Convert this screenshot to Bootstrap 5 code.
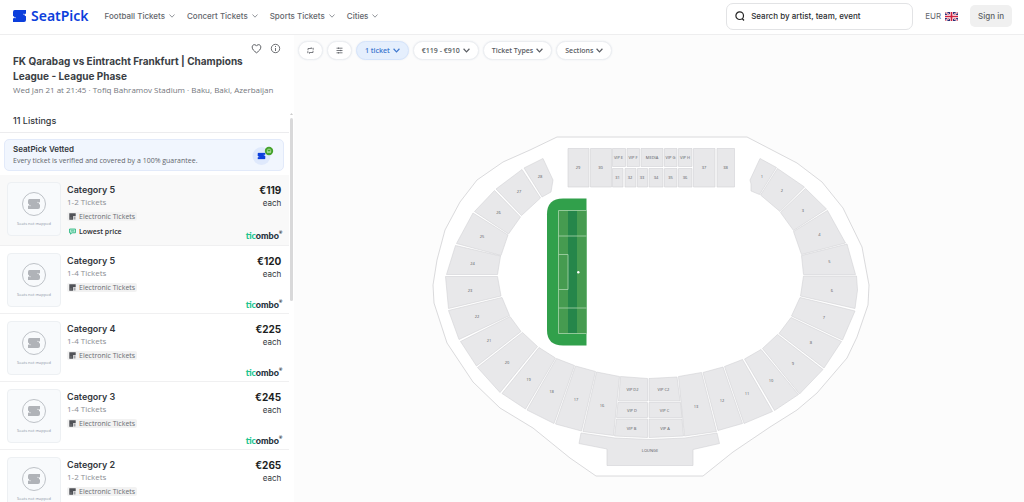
<!DOCTYPE html>
<html lang="en">
<head>
<meta charset="utf-8">
<meta name="viewport" content="width=device-width, initial-scale=1">
<title>FK Qarabag vs Eintracht Frankfurt | SeatPick</title>
<link rel="stylesheet" href="https://cdn.jsdelivr.net/npm/bootstrap@5.3.0/dist/css/bootstrap.min.css">
<style>
  body { font-family: Inter, "Open Sans", sans-serif; font-size: 8px; line-height: 12px; color: #33373d; background: #fcfcfc; }
  button, input { font-family: inherit; }
  .site-head { background: #fff; border-bottom: 1px solid #eeeeef; padding: 2px 12px 4px; min-height: 35px; }
  .brand-name { font-family: "Noto Sans", sans-serif; font-weight: 600; font-size: 14px; line-height: 20px; color: #0c3fdc; }
  .menu-link { border: 0; background: none; padding: 0; font-size: 8px; font-weight: 500; color: #63666c; white-space: nowrap; }
  .menu-list { gap: 12px; margin-left: 16px; }
  .chev { width: 6px; height: 6px; fill: none; stroke: currentColor; stroke-width: 1; }
  .menu-link .chev { color: #94979c; }
  .search-box { width: 187px; height: 27px; border: 1px solid #e2e3e5; border-radius: 7px; padding: 0 8px; gap: 6px; background: #fff; }
  .search-box input { border: 0; outline: 0; padding: 0; min-width: 0; font-size: 8px; font-weight: 500; color: #2b2d31; background: none; }
  .search-box input::placeholder { color: #2b2d31; opacity: 1; }
  .sign-in { border: 0; border-radius: 5px; background: #f0f0f0; color: #5c5f64; font-size: 8px; font-weight: 500; padding: 5px 8px; line-height: 12px; }
  .currency { border: 0; background: none; padding: 0; color: #63666c; gap: 4px; margin: 0 12px; font-size: 8px; }

  .side { width: 294px; background: #fff; }
  .event-info { padding: 8px 8px 0 13px; }
  .event-tools { gap: 8px; }
  .tool-btn { border: 0; background: none; padding: 0; line-height: 0; color: #4a4d52; }
  .event-title { font-size: 10px; line-height: 15px; font-weight: 700; margin: 0; padding-right: 20px; color: #3a3e44; }
  .event-meta { font-family: "Open Sans", sans-serif; color: #74777d; line-height: 12px; white-space: nowrap; }
  .count-head { font-size: 9px; line-height: 12px; font-weight: 500; padding: 19px 13px 5px; margin: 0; border-bottom: 1px solid #ececee; }
  .vetted { margin: 6px 5px 4px 4px; border: 1px solid #e2eafa; border-radius: 5px; background: #f1f6fe; padding: 3px 9px 4px 8px; }
  .vetted-title { font-size: 8px; font-weight: 600; line-height: 12px; }
  .vetted-text { font-family: "Open Sans", sans-serif; font-size: 7px; line-height: 11px; color: #62656b; }
  .ticket-row { height: 68px; padding: 7px 7px 0; border-bottom: 1px solid #f0f0f1; color: inherit; }
  .ticket-row.best { height: 71px; background: #f9f9f9; }
  .thumb { width: 54px; height: 54px; border: 1px solid #edf0f3; border-radius: 4px; background: #f8fafc; padding-top: 8px; }
  .thumb svg { width: 26px; height: 26px; }
  .thumb small { font-family: "Open Sans", sans-serif; font-size: 4px; line-height: 4px; color: #8b95a5; margin-top: 5px; }
  .ticket-body { padding-left: 6px; padding-top: 2px; }
  .cat { font-size: 9px; line-height: 12px; font-weight: 600; }
  .qty { font-family: "Open Sans", sans-serif; line-height: 12px; color: #8b8e94; }
  .tag { font-family: "Open Sans", sans-serif; font-size: 7px; line-height: 9px; background: #f2f2f2; color: #6a6d73; padding: 0 2px; gap: 3px; border-radius: 2px; margin-top: 4px; }
  .tag.low { background: none; color: #2b2d31; font-weight: 600; margin-top: 6px; }
  .tag svg { width: 7px; height: 7px; }
  .ticket-price { padding: 1px 1px 3px 0; }
  .ticket-row.best .ticket-price { padding-bottom: 4px; }
  .price { font-size: 10px; line-height: 14px; font-weight: 700; color: #1d1f23; }
  .seller { font-family: Lato, sans-serif; font-weight: 900; font-size: 9px; line-height: 10px; color: #24303a; margin-right: -1px; }
  .seller b { color: #1cc48f; font-weight: 900; }
  .seller sup { font-size: 4px; top: -5px; }
  .scroll-track { width: 5px; margin: 78px 1px 0 0; gap: 3px; }
  .scroll-thumb { width: 3px; height: 47%; background: #d9d9da; border-radius: 2px; }

  .filters { padding: 6px 4px 5px; gap: 4px; }
  .pill { border: 1px solid #eceef1; border-radius: 10px; height: 19px; background: #fff; box-shadow: 0 0 2px #e6eaf0; font-family: "Open Sans", sans-serif; font-size: 7px; font-weight: 600; color: #5a5d63; padding: 0 8px; gap: 3px; line-height: 10px; white-space: nowrap; }
  .pill.on { background: #e5effd; border-color: #d5e4fb; color: #3f78cf; }
  .pill svg { width: 7px; height: 7px; }
  .map { min-height: 0; }
  .blocks { fill: #e8e8ea; stroke: #d2d2d5; stroke-width: .6; }
  .block-names { font-family: "Open Sans", sans-serif; font-size: 4px; fill: #55575c; text-anchor: middle; }
</style>
<script src="https://cdn.jsdelivr.net/npm/bootstrap@5.3.0/dist/js/bootstrap.bundle.min.js"></script>
</head>
<body class="vh-100 d-flex flex-column overflow-hidden">
<svg class="d-none" aria-hidden="true">
  <symbol id="mark-s" viewBox="0 0 14 12"><path d="M2.200 0H13.500V3.300L12 5q.2.900 1.500 1.200V10q0 2-2 2H.5V8.700L2 7.200Q1.700 6.200.5 6V2Q.5 0 2.200 0z" fill="currentColor"/><path d="M0 7.300l3.500.5M10.500 4.200L14 4.600" stroke="#fff" stroke-width=".6"/></symbol>
  <symbol id="chev" viewBox="0 0 6 6"><path d="M.5 1.500L3 4.200l2.500-2.700"/></symbol>
  <symbol id="no-map" viewBox="0 0 26 26"><circle cx="13" cy="13" r="11.500" fill="none" stroke="#b7bbc1" stroke-width=".9"/><path d="M8.500 8H19v3l-1.200 1.500q.2.800 1.200 1V16q0 2-2 2H7v-3l1.200-1.400Q8 12.800 7 12.500V10q0-2 1.500-2z" fill="#b0b3b8"/><path d="M6.500 14.300l3.500.5M16 11.300l3.500.5" stroke="#f8fafc" stroke-width=".5"/></symbol>
  <symbol id="eticket" viewBox="0 0 7 7"><path d="M.3.300h6.400v3H4v3.400H.3z" fill="#505257"/><path d="M4.500 4h2v2.500h-2z" fill="#a3a5a9"/><path d="M1 5h2" stroke="#999" stroke-width=".5"/></symbol>
</svg>

<header class="site-head d-flex align-items-center">
  <a href="#" class="d-flex align-items-center text-decoration-none gap-1" aria-label="SeatPick">
    <svg width="15" height="12" color="#0c3fdc"><use href="#mark-s"/></svg>
    <span class="brand-name">SeatPick</span>
  </a>
  <nav class="menu-list d-flex align-items-center">
    <button class="menu-link d-flex align-items-center gap-1">Football Tickets <svg class="chev"><use href="#chev"/></svg></button>
    <button class="menu-link d-flex align-items-center gap-1">Concert Tickets <svg class="chev"><use href="#chev"/></svg></button>
    <button class="menu-link d-flex align-items-center gap-1">Sports Tickets <svg class="chev"><use href="#chev"/></svg></button>
    <button class="menu-link d-flex align-items-center gap-1">Cities <svg class="chev"><use href="#chev"/></svg></button>
  </nav>
  <label class="search-box d-flex align-items-center ms-auto">
    <svg width="10" height="10" viewBox="0 0 10 10" fill="none" stroke="#222" stroke-width="1.200"><circle cx="4.700" cy="4.700" r="3.800"/><path d="M7.200 7.500L9 9.500"/></svg>
    <input class="flex-fill" type="text" placeholder="Search by artist, team, event" aria-label="Search by artist, team, event">
  </label>
  <button class="currency d-flex align-items-center">EUR
    <svg width="13" height="9" viewBox="0 0 13 9"><rect width="13" height="9" rx="1" fill="#2b2f77"/><path d="M0 0l13 9M13 0L0 9" stroke="#fff" stroke-width="1.800"/><path d="M0 0l13 9M13 0L0 9" stroke="#d0314a" stroke-width=".7"/><path d="M6.500 0v9M0 4.500h13" stroke="#fff" stroke-width="3"/><path d="M6.500 0v9M0 4.500h13" stroke="#d0213f" stroke-width="1.700"/></svg>
  </button>
  <button class="sign-in">Sign in</button>
</header>

<div class="d-flex flex-fill overflow-hidden">
  <aside class="side d-flex flex-shrink-0">
    <div class="flex-fill overflow-hidden">
      <div class="event-info">
        <div class="event-tools d-flex justify-content-end">
          <button class="tool-btn" aria-label="Save"><svg width="11" height="11" viewBox="0 0 11 11" fill="none" stroke="currentColor" stroke-width=".9"><path d="M5.500 9.800C3 8 1.200 6.400 1.200 4.100c0-2.700 3.200-3.300 4.300-1 1.100-2.300 4.300-1.700 4.300 1 0 2.300-1.800 3.900-4.300 5.700z"/></svg></button>
          <button class="tool-btn" aria-label="Info"><svg width="11" height="11" viewBox="0 0 11 11" fill="none" stroke="currentColor" stroke-width=".8"><circle cx="5.500" cy="5.500" r="4.200"/><path d="M5.500 5v3M5.500 3v1"/></svg></button>
        </div>
        <h1 class="event-title">FK Qarabag vs Eintracht Frankfurt | Champions League - League Phase</h1>
        <div class="event-meta">Wed Jan 21 at 21:45 · Tofiq Bahramov Stadium · Baku, Baki, Azerbaijan</div>
      </div>
      <h2 class="count-head">11 Listings</h2>
      <div class="vetted d-flex align-items-center justify-content-between">
        <div>
          <div class="vetted-title">SeatPick Vetted</div>
          <div class="vetted-text">Every ticket is verified and covered by a 100% guarantee.</div>
        </div>
        <svg width="22" height="20" viewBox="0 0 22 20"><circle cx="9.500" cy="11" r="9" fill="#dfe9fc"/><svg x="5" y="7.500" width="9" height="7" color="#0c3fdc"><use href="#mark-s"/></svg><circle cx="17" cy="6" r="4.200" fill="#46a32c"/><path d="M15.300 6.800V5.600q0-1.500 1.700-1.500t1.700 1.500v1.200zM15 7.300h4" fill="none" stroke="#c9efb6" stroke-width=".7"/></svg>
      </div>

      <article class="ticket-row best d-flex">
        <div class="thumb d-flex flex-column align-items-center"><svg><use href="#no-map"/></svg><small>Seats not mapped</small></div>
        <div class="ticket-body flex-fill d-flex flex-column align-items-start">
          <div class="cat">Category 5</div><div class="qty">1-2 Tickets</div>
          <div class="tag d-flex align-items-center"><svg><use href="#eticket"/></svg>Electronic Tickets</div>
          <div class="tag low d-flex align-items-center"><svg viewBox="0 0 7 7"><path d="M.5 1h6v3.800H3L1.500 6.200V4.800h-1z" fill="#b5ead4" stroke="#23b57c" stroke-width=".8"/><path d="M2 2.900h3" stroke="#23b57c" stroke-width=".8"/></svg>Lowest price</div>
        </div>
        <div class="ticket-price d-flex flex-column align-items-end"><div class="price">€119</div><div>each</div><div class="seller mt-auto"><b>tic</b>ombo<sup>®</sup></div></div>
      </article>
      <article class="ticket-row d-flex">
        <div class="thumb d-flex flex-column align-items-center"><svg><use href="#no-map"/></svg><small>Seats not mapped</small></div>
        <div class="ticket-body flex-fill d-flex flex-column align-items-start">
          <div class="cat">Category 5</div><div class="qty">1-4 Tickets</div>
          <div class="tag d-flex align-items-center"><svg><use href="#eticket"/></svg>Electronic Tickets</div>
        </div>
        <div class="ticket-price d-flex flex-column align-items-end"><div class="price">€120</div><div>each</div><div class="seller mt-auto"><b>tic</b>ombo<sup>®</sup></div></div>
      </article>
      <article class="ticket-row d-flex">
        <div class="thumb d-flex flex-column align-items-center"><svg><use href="#no-map"/></svg><small>Seats not mapped</small></div>
        <div class="ticket-body flex-fill d-flex flex-column align-items-start">
          <div class="cat">Category 4</div><div class="qty">1-4 Tickets</div>
          <div class="tag d-flex align-items-center"><svg><use href="#eticket"/></svg>Electronic Tickets</div>
        </div>
        <div class="ticket-price d-flex flex-column align-items-end"><div class="price">€225</div><div>each</div><div class="seller mt-auto"><b>tic</b>ombo<sup>®</sup></div></div>
      </article>
      <article class="ticket-row d-flex">
        <div class="thumb d-flex flex-column align-items-center"><svg><use href="#no-map"/></svg><small>Seats not mapped</small></div>
        <div class="ticket-body flex-fill d-flex flex-column align-items-start">
          <div class="cat">Category 3</div><div class="qty">1-4 Tickets</div>
          <div class="tag d-flex align-items-center"><svg><use href="#eticket"/></svg>Electronic Tickets</div>
        </div>
        <div class="ticket-price d-flex flex-column align-items-end"><div class="price">€245</div><div>each</div><div class="seller mt-auto"><b>tic</b>ombo<sup>®</sup></div></div>
      </article>
      <article class="ticket-row d-flex">
        <div class="thumb d-flex flex-column align-items-center"><svg><use href="#no-map"/></svg><small>Seats not mapped</small></div>
        <div class="ticket-body flex-fill d-flex flex-column align-items-start">
          <div class="cat">Category 2</div><div class="qty">1-2 Tickets</div>
          <div class="tag d-flex align-items-center"><svg><use href="#eticket"/></svg>Electronic Tickets</div>
        </div>
        <div class="ticket-price d-flex flex-column align-items-end"><div class="price">€265</div><div>each</div></div>
      </article>
    </div>
    <div class="scroll-track d-flex flex-column align-items-center" aria-hidden="true">
      <svg width="3" height="2" viewBox="0 0 3 2"><path d="M0 2L1.500 0 3 2z" fill="#ccc"/></svg>
      <div class="scroll-thumb"></div>
    </div>
  </aside>

  <main class="flex-fill d-flex flex-column overflow-hidden">
    <div class="filters d-flex">
      <button class="pill d-flex align-items-center" aria-label="Refresh"><svg viewBox="0 0 7 7" fill="none" stroke="currentColor" stroke-width=".8"><path d="M1 3.300V1.500h3.800M4 .3l1.200 1.200M6.200.8v2M6 3.700v1.800H2.200M3 6.700L1.800 5.500M.8 4.200v2"/></svg></button>
      <button class="pill d-flex align-items-center" aria-label="Filters"><svg viewBox="0 0 7 7" fill="none" stroke="currentColor" stroke-width=".8"><path d="M.5 1.200h6M.5 3.500h6M.5 5.800h6M2.500.5v1.400M4.700 2.800v1.400M2.500 5.100v1.400"/></svg></button>
      <button class="pill on d-flex align-items-center">1 ticket <svg class="chev"><use href="#chev"/></svg></button>
      <button class="pill d-flex align-items-center">€119 - €910 <svg class="chev"><use href="#chev"/></svg></button>
      <button class="pill d-flex align-items-center">Ticket Types <svg class="chev"><use href="#chev"/></svg></button>
      <button class="pill d-flex align-items-center">Sections <svg class="chev"><use href="#chev"/></svg></button>
    </div>
    <svg class="map flex-fill w-100" viewBox="294 65 730 437" role="img" aria-label="Tofiq Bahramov Stadium seating plan">
      <path d="M557 137H747L797 163 822 182 843 208 862 247 869 285 868 305 857 337 847 358 817 393 797 410 770 427 733 452 703 476H596L570 458 533 428 500 408 473 382 447 343 434 303 433 285 437 260 445 230 460 202 477 180 503 162 530 150Z" fill="#fff" stroke="#d0d0d3" stroke-width=".8"/>
      <g class="blocks">
        <path d="M568 148.500h21v38.500h-21zM590.500 148.500h21v38.500h-21zM612.500 148.500h13v18h-13zM627 148.500h12.500v18H627zM641 148.500h22v18h-22zM664.500 148.500h12.500v18h-12.500zM678.500 148.500h13.500v18h-13.500zM612.500 168.500H623V187h-10.500zM625 168.500h11V187h-11zM637.500 168.500H647.500V187h-10zM649 168.500h14V187h-14zM664.500 168.500H677V187h-12.500zM678.500 168.500H692V187h-13.500zM693.500 148.500h21.500v38.500h-21.500zM717 148.500h17.500v38.500H717z"/>
        <path d="M524 168L543 158.500 553 180 551 192 542 197ZM496 189L522 169.500 540.500 198 521.500 215.500ZM474.500 211.500L494.500 190.500 520.500 217 508.500 234ZM456.500 243.500L473 213 508 235 501 255.500ZM446.500 274.500L455.500 245.500 500.500 256 497.500 274.500ZM445.500 276.500H497.500L501 296 448.500 308.500ZM448.500 310.500L502 297.500 509.500 315.500 459 339.500ZM460.500 341.500L510 316.500 521 331.500 476.500 366ZM477.500 367.500L522.500 332.500 537.500 346.500 500 392.500ZM502 393.500L539 347.500 555.500 358 525.500 409ZM527 410L556.500 358.500 574.500 365.500 554 423.500ZM555.500 424L575.500 366 595.500 371.500 581.500 431ZM583 431.500L596.500 372 619.500 376.500 613.500 435.500Z"/>
        <path d="M620.500 376.500L647.500 378.500V401H618.500ZM618 402.500H647.500V417.500H616.500ZM616.500 419H647.500V437.500L614.500 436ZM649 378.500L677 377 680 401H649ZM649 402.500H680.500L682 417.500H649ZM649 419H682L683.500 436 649 437.500Z"/>
        <path d="M678.500 376.500L701.500 372.500 716.500 431.500 684.500 436ZM703 372.500L723 367 742.500 423.500 718 430.500ZM724.500 366.500L742.500 359.500 772.500 411.500 744 423.500ZM744.500 359L761 349.500 798.500 394.500 774.500 410.500ZM762.500 348.500L777.500 334.500 823 369.500 799.500 394ZM779 333.500L791 317.500 841.500 341.500 824 368ZM791.500 316L800 297.500 855 311 842.500 340ZM803.500 276H856.500L857.500 290 855 308.500 800.500 296ZM801.500 255.500L847 244 855.500 274.500H803.500ZM793.500 231.500L827.500 210.500 845.500 243 801.500 254.500ZM780.500 212.500L805.500 188.500 826.500 209 793.500 230.500ZM760.500 195L777.500 168.500 804.500 187 780 211.500ZM760 158.500L776.500 167.500 759.500 194.500 751 191V184L750 180Z"/>
        <path d="M581 433L615 438 650 439.500 685 438 717 433 719.500 443.500 693 449.500V465.500H607V449L579 443.500Z"/>
      </g>
      <path d="M586.500 198.500H563Q547 198.500 547 214.500V330Q547 345.500 563 345.500H586.500Z" fill="#31a04b"/>
      <path d="M558.500 210.500h28v123h-28z" fill="#469b50"/><path d="M568 210.500h9v123h-9z" fill="#25864a"/>
      <path d="M586.500 210.500h-28v123h28M558.500 236h28M558.500 308h28M558.500 254.500H568v35h-9.500" fill="none" stroke="#a9d5ad" stroke-width=".8"/>
      <circle cx="578.300" cy="272.200" r="1.200" fill="#fff"/>
      <g class="block-names">
        <text x="578" y="169">29</text><text x="600.500" y="169">30</text><text x="618.500" y="159">VIP E</text><text x="633" y="159">VIP F</text><text x="652" y="159">MEDIA</text><text x="670.500" y="159">VIP G</text><text x="685" y="159">VIP H</text><text x="617.500" y="179">31</text><text x="630" y="179">32</text><text x="642" y="179">33</text><text x="656" y="179">34</text><text x="670.500" y="179">35</text><text x="685" y="179">36</text><text x="704" y="169">37</text><text x="725.500" y="169">38</text>
        <text x="540" y="178">28</text><text x="519" y="193">27</text><text x="498.500" y="213.500">26</text><text x="482" y="237.500">25</text><text x="472.500" y="264.500">24</text><text x="470" y="291.500">23</text><text x="477" y="318">22</text><text x="489" y="342">21</text><text x="507" y="363.500">20</text><text x="528.500" y="380.500">19</text><text x="551.500" y="393">18</text><text x="576" y="401">17</text><text x="602" y="407">16</text>
        <text x="632.500" y="391">VIP D2</text><text x="632" y="411.500">VIP D</text><text x="631.500" y="430">VIP B</text><text x="663.500" y="391">VIP C2</text><text x="664.500" y="411.500">VIP C</text><text x="665" y="430">VIP A</text><text x="650" y="451.500">LOUNGE</text>
        <text x="696" y="407.500">13</text><text x="722" y="401.500">12</text><text x="747" y="394.500">11</text><text x="771" y="381.500">10</text><text x="793" y="365">9</text><text x="811" y="343.500">8</text><text x="824" y="318.500">7</text><text x="832" y="291.500">6</text><text x="829.500" y="263">5</text><text x="819.500" y="236">4</text><text x="803" y="211.500">3</text><text x="782" y="191.500">2</text><text x="762" y="177.500">1</text>
      </g>
    </svg>
  </main>
</div>
</body>
</html>
